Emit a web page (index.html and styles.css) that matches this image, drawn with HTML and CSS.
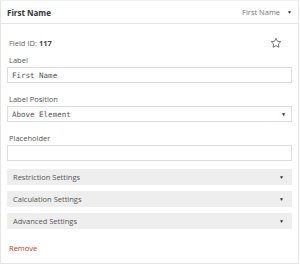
FILE: index.html
```html
<!DOCTYPE html>
<html lang="en">
<head>
    <meta charset="UTF-8">
    <title>Field Settings</title>
    <link rel="stylesheet" href="styles.css">
</head>
<body>
    <div class="field-panel">
        <!-- Header -->
        <div class="field-header">
            <span class="field-title">First Name</span>
            <span class="field-type">First Name <span class="caret">&#9660;</span></span>
        </div>

        <div class="field-body">
            <div class="field-id-row">
                <span class="field-id">Field ID: <b>117</b></span>
                <svg class="star" width="12" height="12" viewBox="0 0 24 24">
                    <path d="M12 2.5l2.9 6.1 6.6.8-4.9 4.6 1.3 6.6L12 17.3l-5.9 3.3 1.3-6.6-4.9-4.6 6.6-.8z" fill="none" stroke="#555" stroke-width="1.6" stroke-linejoin="round"/>
                </svg>
            </div>

            <label class="setting-label first">Label</label>
            <div class="text-input">First Name</div>

            <label class="setting-label">Label Position</label>
            <div class="text-input select">Above Element <span class="caret">&#9660;</span></div>

            <label class="setting-label">Placeholder</label>
            <div class="text-input"></div>

            <!-- Collapsed sections -->
            <div class="sections">
                <div class="section-bar">Restriction Settings <span class="caret">&#9660;</span></div>
                <div class="section-bar">Calculation Settings <span class="caret">&#9660;</span></div>
                <div class="section-bar">Advanced Settings <span class="caret">&#9660;</span></div>
            </div>

            <a class="remove-link" href="#">Remove</a>
        </div>
    </div>
</body>
</html>
```

FILE: styles.css
```css
body {
    margin: 0;
    font-family: "Open Sans", sans-serif;
    background: #fff;
    color: #444;
}

.field-panel {
    width: 299px;
    height: 264px;
    border: 1px solid #e5e5e5;
    border-top-color: #f0f0f0;
    box-sizing: border-box;
}

.field-header {
    height: 22px;
    border-bottom: 1px solid #e5e5e5;
    display: flex;
    align-items: center;
    justify-content: space-between;
    padding: 0 6px;
}

.field-title {
    font-size: 8px;
    font-weight: bold;
    color: #333;
}

.field-type {
    font-size: 7.5px;
    color: #777;
    display: flex;
    align-items: center;
    gap: 7px;
}

.caret {
    font-size: 5px;
    color: #333;
}

.field-body {
    padding: 0 6px;
}

.field-id-row {
    display: flex;
    align-items: center;
    justify-content: space-between;
    height: 16px;
    margin-top: 11px;
    padding: 0 10px 0 2px;
}

.field-id {
    font-size: 7.5px;
    color: #666;
}

.field-id b {
    color: #444;
}

.star {
    display: block;
}

.setting-label {
    display: block;
    font-size: 7.5px;
    color: #555;
    line-height: 10px;
    margin-top: 11px;
    padding-left: 2px;
}

.setting-label.first {
    margin-top: 4px;
}

.text-input {
    height: 16px;
    margin-top: 2px;
    border: 1px solid #ddd;
    box-sizing: border-box;
    font-family: "DejaVu Sans Mono", monospace;
    font-size: 7.5px;
    color: #555;
    padding: 0 4px 0 4px;
    display: flex;
    align-items: center;
    justify-content: space-between;
}

.select {
    padding-right: 6px;
}

.sections {
    margin-top: 8px;
    display: flex;
    flex-direction: column;
    gap: 6px;
}

.section-bar {
    height: 16px;
    background: #eee;
    font-size: 7.5px;
    color: #555;
    display: flex;
    align-items: center;
    justify-content: space-between;
    padding: 0 8px 0 6px;
}

.remove-link {
    display: block;
    margin-top: 14px;
    padding-left: 2px;
    line-height: 10px;
    font-size: 7.5px;
    color: #c0392b;
    text-decoration: none;
}
```
